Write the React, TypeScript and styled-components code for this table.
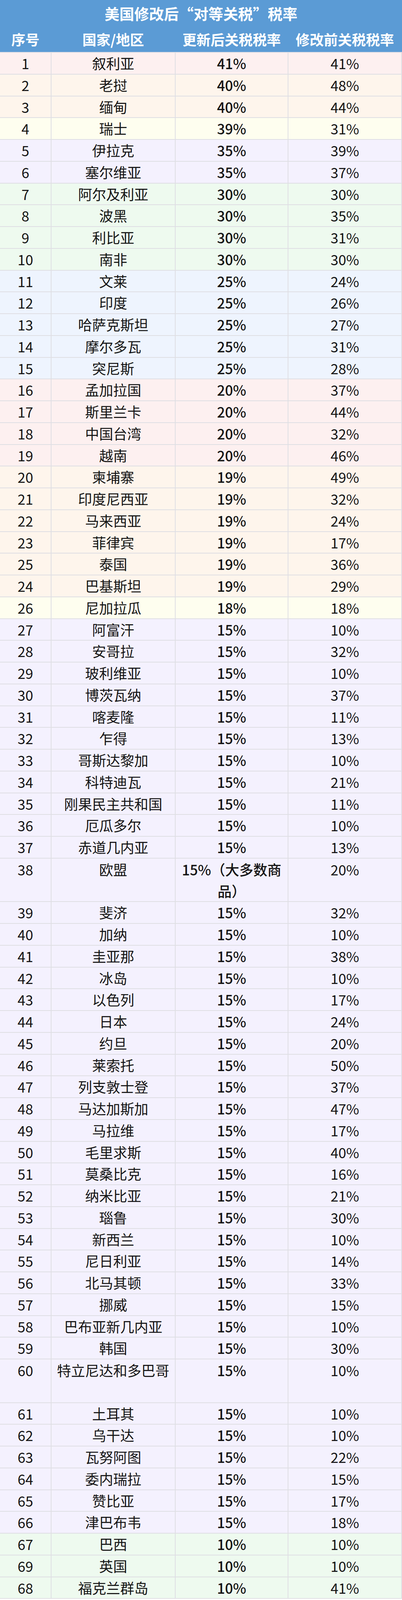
import React from "react";
import styled, { createGlobalStyle } from "styled-components";

const GlobalStyle = createGlobalStyle`
  html, body {
    margin: 0;
    padding: 0;
    background: #ffffff;
  }
  body {
    font-family: "Noto Sans CJK SC", "Noto Sans", sans-serif;
    color: #141414;
    overflow: hidden;
  }
`;

type Tone = "pink" | "peach" | "yellow" | "lavender" | "green" | "blue";

const toneColors: Record<Tone, string> = {
  pink: "#fdf0f0",
  peach: "#fef5ec",
  yellow: "#fefeef",
  lavender: "#f4f1fe",
  green: "#eefaef",
  blue: "#eef4fe",
};

const toneByRate: Record<string, Tone> = {
  "41": "pink",
  "40": "peach",
  "39": "yellow",
  "35": "lavender",
  "30": "green",
  "25": "blue",
  "20": "pink",
  "19": "peach",
  "18": "yellow",
  "15": "lavender",
  "10": "green",
};

type Entry = {
  no: number;
  name: string;
  next: string;
  prev: string;
  lines?: number;
};

const data: Entry[] = [
  { no: 1, name: "叙利亚", next: "41%", prev: "41%" },
  { no: 2, name: "老挝", next: "40%", prev: "48%" },
  { no: 3, name: "缅甸", next: "40%", prev: "44%" },
  { no: 4, name: "瑞士", next: "39%", prev: "31%" },
  { no: 5, name: "伊拉克", next: "35%", prev: "39%" },
  { no: 6, name: "塞尔维亚", next: "35%", prev: "37%" },
  { no: 7, name: "阿尔及利亚", next: "30%", prev: "30%" },
  { no: 8, name: "波黑", next: "30%", prev: "35%" },
  { no: 9, name: "利比亚", next: "30%", prev: "31%" },
  { no: 10, name: "南非", next: "30%", prev: "30%" },
  { no: 11, name: "文莱", next: "25%", prev: "24%" },
  { no: 12, name: "印度", next: "25%", prev: "26%" },
  { no: 13, name: "哈萨克斯坦", next: "25%", prev: "27%" },
  { no: 14, name: "摩尔多瓦", next: "25%", prev: "31%" },
  { no: 15, name: "突尼斯", next: "25%", prev: "28%" },
  { no: 16, name: "孟加拉国", next: "20%", prev: "37%" },
  { no: 17, name: "斯里兰卡", next: "20%", prev: "44%" },
  { no: 18, name: "中国台湾", next: "20%", prev: "32%" },
  { no: 19, name: "越南", next: "20%", prev: "46%" },
  { no: 20, name: "柬埔寨", next: "19%", prev: "49%" },
  { no: 21, name: "印度尼西亚", next: "19%", prev: "32%" },
  { no: 22, name: "马来西亚", next: "19%", prev: "24%" },
  { no: 23, name: "菲律宾", next: "19%", prev: "17%" },
  { no: 25, name: "泰国", next: "19%", prev: "36%" },
  { no: 24, name: "巴基斯坦", next: "19%", prev: "29%" },
  { no: 26, name: "尼加拉瓜", next: "18%", prev: "18%" },
  { no: 27, name: "阿富汗", next: "15%", prev: "10%" },
  { no: 28, name: "安哥拉", next: "15%", prev: "32%" },
  { no: 29, name: "玻利维亚", next: "15%", prev: "10%" },
  { no: 30, name: "博茨瓦纳", next: "15%", prev: "37%" },
  { no: 31, name: "喀麦隆", next: "15%", prev: "11%" },
  { no: 32, name: "乍得", next: "15%", prev: "13%" },
  { no: 33, name: "哥斯达黎加", next: "15%", prev: "10%" },
  { no: 34, name: "科特迪瓦", next: "15%", prev: "21%" },
  { no: 35, name: "刚果民主共和国", next: "15%", prev: "11%" },
  { no: 36, name: "厄瓜多尔", next: "15%", prev: "10%" },
  { no: 37, name: "赤道几内亚", next: "15%", prev: "13%" },
  { no: 38, name: "欧盟", next: "15%（大多数商品）", prev: "20%", lines: 2 },
  { no: 39, name: "斐济", next: "15%", prev: "32%" },
  { no: 40, name: "加纳", next: "15%", prev: "10%" },
  { no: 41, name: "圭亚那", next: "15%", prev: "38%" },
  { no: 42, name: "冰岛", next: "15%", prev: "10%" },
  { no: 43, name: "以色列", next: "15%", prev: "17%" },
  { no: 44, name: "日本", next: "15%", prev: "24%" },
  { no: 45, name: "约旦", next: "15%", prev: "20%" },
  { no: 46, name: "莱索托", next: "15%", prev: "50%" },
  { no: 47, name: "列支敦士登", next: "15%", prev: "37%" },
  { no: 48, name: "马达加斯加", next: "15%", prev: "47%" },
  { no: 49, name: "马拉维", next: "15%", prev: "17%" },
  { no: 50, name: "毛里求斯", next: "15%", prev: "40%" },
  { no: 51, name: "莫桑比克", next: "15%", prev: "16%" },
  { no: 52, name: "纳米比亚", next: "15%", prev: "21%" },
  { no: 53, name: "瑙鲁", next: "15%", prev: "30%" },
  { no: 54, name: "新西兰", next: "15%", prev: "10%" },
  { no: 55, name: "尼日利亚", next: "15%", prev: "14%" },
  { no: 56, name: "北马其顿", next: "15%", prev: "33%" },
  { no: 57, name: "挪威", next: "15%", prev: "15%" },
  { no: 58, name: "巴布亚新几内亚", next: "15%", prev: "10%" },
  { no: 59, name: "韩国", next: "15%", prev: "30%" },
  { no: 60, name: "特立尼达和多巴哥", next: "15%", prev: "10%", lines: 2 },
  { no: 61, name: "土耳其", next: "15%", prev: "10%" },
  { no: 62, name: "乌干达", next: "15%", prev: "10%" },
  { no: 63, name: "瓦努阿图", next: "15%", prev: "22%" },
  { no: 64, name: "委内瑞拉", next: "15%", prev: "15%" },
  { no: 65, name: "赞比亚", next: "15%", prev: "17%" },
  { no: 66, name: "津巴布韦", next: "15%", prev: "18%" },
  { no: 67, name: "巴西", next: "10%", prev: "10%" },
  { no: 69, name: "英国", next: "10%", prev: "10%" },
  { no: 68, name: "福克兰群岛", next: "10%", prev: "41%" },
];

/* The capture is 4096px tall, so the row pitch is tightened to fit all rows. */
const ROW = 53.75;
const columns = "130px 316px 287px 1fr";
const lineColor = "#dfdfe4";

const Page = styled.div`
  width: 1030px;
  background: #ffffff;
`;

const Header = styled.header`
  background: #5b9bd5;
  color: #ffffff;
`;

const Title = styled.h1`
  margin: 0;
  height: 67px;
  display: flex;
  align-items: center;
  justify-content: center;
  font-size: 38px;
  font-weight: 700;
  line-height: 1;
`;

const HeaderRow = styled.div`
  display: grid;
  grid-template-columns: ${columns};
  column-gap: 2px;
  padding-right: 2px;
  height: 66px;
  align-items: center;
`;

const HeaderCell = styled.div`
  text-align: center;
  font-size: 36px;
  font-weight: 700;
  line-height: 1;
  white-space: nowrap;
`;

const Body = styled.div`
  display: flex;
  flex-direction: column;
  gap: 2px;
  padding: 2px 2px 2px 0;
  background: ${lineColor};
`;

const Row = styled.div<{ $lines: number }>`
  display: grid;
  grid-template-columns: ${columns};
  grid-template-rows: ${(p) => (p.$lines > 1 ? ROW * 2 + 2 : ROW)}px;
  column-gap: 2px;
  overflow: hidden;
`;

const Cell = styled.div<{ $tone: Tone; $lines: number; $weight?: number }>`
  background: ${(p) => toneColors[p.$tone]};
  text-align: center;
  font-size: 36px;
  font-weight: ${(p) => p.$weight ?? 400};
  line-height: ${(p) => (p.$lines > 1 ? ROW + 1 : ROW)}px;
  padding: 0 4px;
  color: #141414;
  overflow: hidden;
`;

export default function App() {
  return (
    <Page lang="zh-CN">
      <GlobalStyle />
      <Header>
        <Title>美国修改后“对等关税”税率</Title>
        <HeaderRow>
          <HeaderCell>序号</HeaderCell>
          <HeaderCell>国家/地区</HeaderCell>
          <HeaderCell>更新后关税税率</HeaderCell>
          <HeaderCell>修改前关税税率</HeaderCell>
        </HeaderRow>
      </Header>
      <Body>
        {data.map((d) => {
          const tone = toneByRate[d.next.slice(0, 2)];
          const lines = d.lines ?? 1;
          return (
            <Row key={d.no} $lines={lines}>
              <Cell $tone={tone} $lines={lines}>{d.no}</Cell>
              <Cell $tone={tone} $lines={lines}>{d.name}</Cell>
              <Cell $tone={tone} $lines={lines} $weight={500}>{d.next}</Cell>
              <Cell $tone={tone} $lines={lines}>{d.prev}</Cell>
            </Row>
          );
        })}
      </Body>
    </Page>
  );
}
